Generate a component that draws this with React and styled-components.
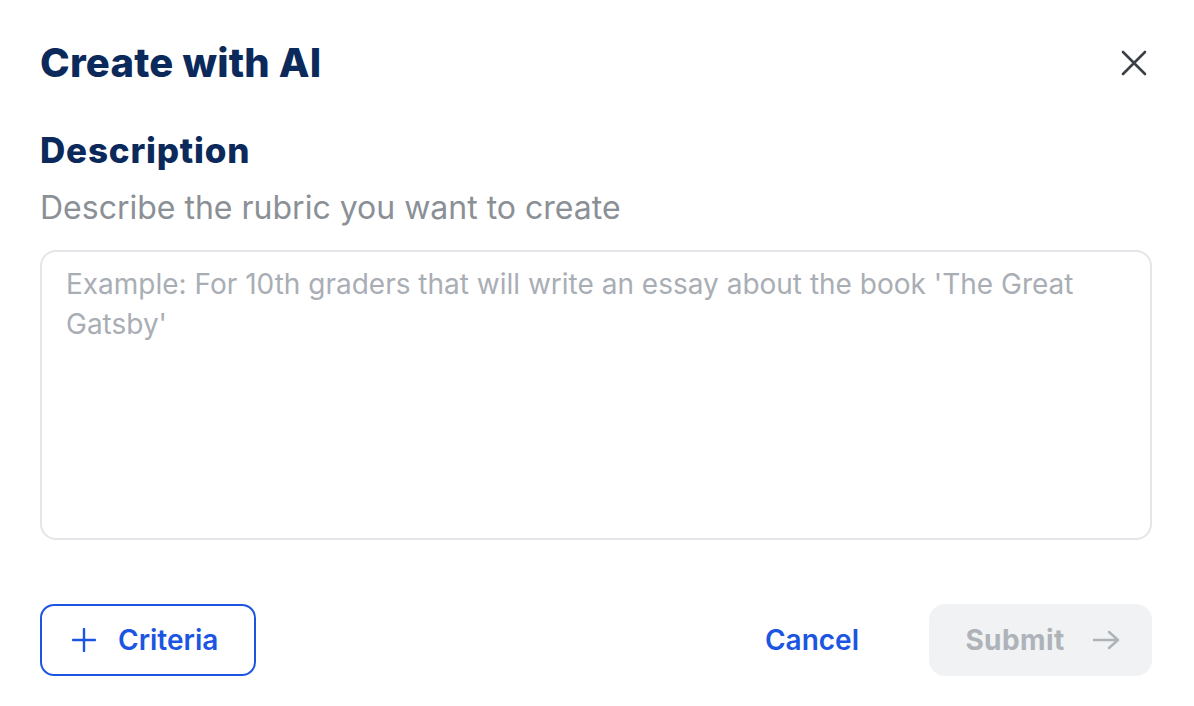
import React from "react";
import styled, { createGlobalStyle } from "styled-components";

const Global = createGlobalStyle`
  html, body { margin: 0; padding: 0; background: #ffffff; }
  * { box-sizing: border-box; }
  body { font-family: Inter, "Noto Sans", sans-serif; }
`;

const Dialog = styled.div`
  width: 1194px;
  height: 706px;
  padding: 37px 42px 30px 40px;
  display: flex;
  flex-direction: column;
  background: #fff;
`;

const Header = styled.div`
  display: flex;
  align-items: center;
  justify-content: space-between;
  height: 52px;
`;

const Title = styled.h1`
  margin: 0;
  font-size: 40px;
  line-height: 52px;
  font-weight: 800;
  color: #0b2a5b;
  letter-spacing: 0.2px;
`;

const CloseButton = styled.button`
  border: 0;
  background: none;
  padding: 0;
  width: 32px;
  height: 32px;
  display: flex;
  align-items: center;
  justify-content: center;
  margin-right: 2px;
  cursor: pointer;
  color: #3b4046;
`;

const Label = styled.h2`
  margin: 39px 0 0;
  font-size: 35px;
  line-height: 44px;
  font-weight: 800;
  color: #0b2a5b;
  letter-spacing: 0.8px;
`;

const Hint = styled.p`
  margin: 16px 0 0;
  font-size: 32px;
  line-height: 40px;
  font-weight: 400;
  color: #8b9096;
`;

const TextArea = styled.textarea`
  margin-top: 22px;
  width: 100%;
  height: 290px;
  flex: none;
  resize: none;
  border: 2px solid #e3e5e8;
  border-radius: 16px;
  padding: 12px 24px;
  font-family: Inter, "Noto Sans", sans-serif;
  font-size: 28px;
  line-height: 40px;
  color: #1f2937;
  outline: none;
  &::placeholder { color: #a9aeb5; }
`;

const Footer = styled.div`
  margin-top: 64px;
  display: flex;
  align-items: center;
  gap: 24px;
`;

const Spacer = styled.div`
  flex: 1;
`;

const OutlineButton = styled.button`
  height: 72px;
  width: 216px;
  border: 2px solid #1b55e2;
  border-radius: 14px;
  background: #fff;
  color: #1b55e2;
  font-family: Inter, "Noto Sans", sans-serif;
  font-size: 28px;
  font-weight: 600;
  display: flex;
  align-items: center;
  gap: 22px;
  padding: 0 0 0 30px;
  cursor: pointer;
`;

const TextButton = styled.button`
  border: 0;
  background: none;
  color: #1b55e2;
  font-family: Inter, "Noto Sans", sans-serif;
  font-size: 28px;
  font-weight: 600;
  padding: 0 46px 0 0;
  cursor: pointer;
`;

const SolidButton = styled.button`
  height: 72px;
  width: 223px;
  border: 0;
  border-radius: 16px;
  background: ${(p) => (p.disabled ? "#f0f2f4" : "#1b55e2")};
  color: ${(p) => (p.disabled ? "#aeb3b9" : "#fff")};
  font-family: Inter, "Noto Sans", sans-serif;
  font-size: 28px;
  font-weight: 700;
  letter-spacing: 0.4px;
  display: flex;
  align-items: center;
  justify-content: center;
  gap: 27px;
  padding: 0 0 0 4px;
`;

const PlusIcon = () => (
  <svg width="24" height="24" viewBox="0 0 24 24" fill="none" stroke="currentColor" strokeWidth="2.4" strokeLinecap="round">
    <path d="M12 1v22M1 12h22" />
  </svg>
);

const ArrowIcon = () => (
  <svg width="28" height="22" viewBox="0 0 28 22" fill="none" stroke="currentColor" strokeWidth="2.4" strokeLinecap="round" strokeLinejoin="round">
    <path d="M2 11h24M17 3l9 8-9 8" />
  </svg>
);

const CloseIcon = () => (
  <svg width="26" height="26" viewBox="0 0 26 26" fill="none" stroke="currentColor" strokeWidth="2.6" strokeLinecap="round">
    <path d="M2 2l22 22M24 2L2 24" />
  </svg>
);

export default function App() {
  return (
    <>
      <Global />
      <Dialog>
        <Header>
          <Title>Create with AI</Title>
          <CloseButton aria-label="Close">
            <CloseIcon />
          </CloseButton>
        </Header>
        <Label>Description</Label>
        <Hint>Describe the rubric you want to create</Hint>
        <TextArea placeholder="Example: For 10th graders that will write an essay about the book 'The Great Gatsby'" />
        <Footer>
          <OutlineButton>
            <PlusIcon />
            Criteria
          </OutlineButton>
          <Spacer />
          <TextButton>Cancel</TextButton>
          <SolidButton disabled>
            Submit
            <ArrowIcon />
          </SolidButton>
        </Footer>
      </Dialog>
    </>
  );
}
